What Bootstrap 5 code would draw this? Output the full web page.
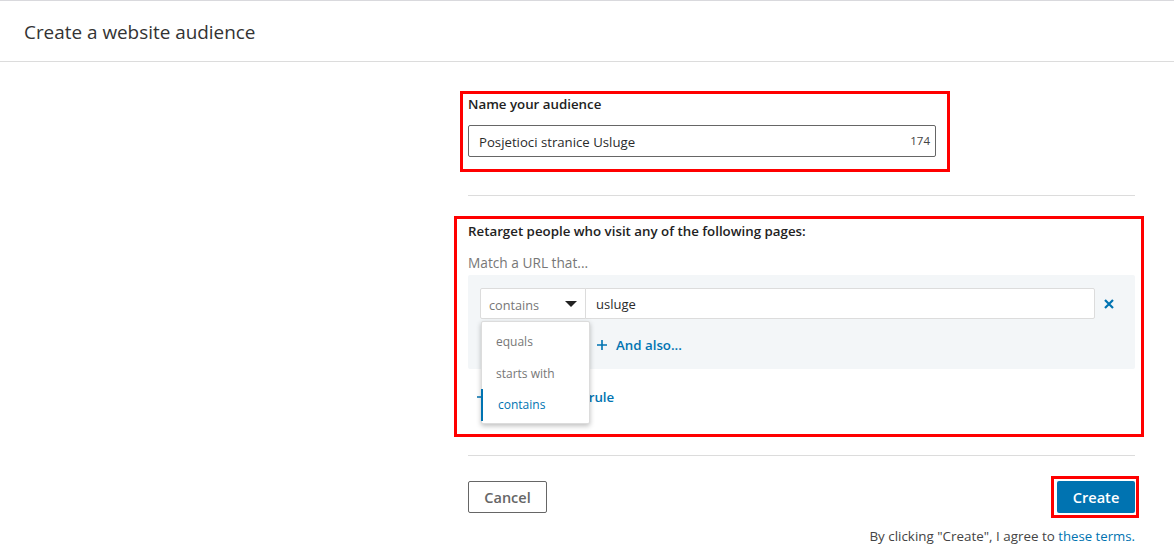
<!DOCTYPE html>
<html lang="en">
<head>
    <meta charset="UTF-8">
    <meta name="viewport" content="width=device-width, initial-scale=1.0">
    <title>Create a website audience</title>
    <link href="https://cdn.jsdelivr.net/npm/bootstrap@5.3.0/dist/css/bootstrap.min.css" rel="stylesheet">
    <style>
        html, body { height: 558px; overflow: hidden; }
        body { font-family: "Open Sans", "Noto Sans", sans-serif; font-size: 13px; color: #2b2b2b; background: #fff; }
        .page-head { height: 62px; padding: 2px 0 0 24px; border-top: 1px solid #d9d9dd; border-bottom: 1px solid #dcdcdc; font-size: 18.9px; color: #333; }
        .form-col { width: 667px; margin-left: 468px; padding-top: 29px; }
        .red-box { border: 3px solid #f00; }
        .box-name { width: 490px; height: 81px; margin-left: -8px; padding: 0 11px 0 5px; }
        .box-rules { width: 690px; height: 221px; margin-top: 20px; margin-left: -14px; padding: 2px 6px 0 11px; position: relative; }
        .box-create { width: 88px; height: 42px; margin-right: -4px; padding: 2px 3px; }
        .field-label { font-weight: 600; font-size: 13.3px; line-height: 20px; color: #222; }
        .name-input { height: 32px; margin-top: 11px; padding: 3px 5px 0 10px; border: 1px solid #666; border-radius: 2px; font-size: 13.2px; }
        .counter { font-size: 11.5px; color: #444; margin-top: -3px; }
        .rule { height: 1px; background: #dcdcdc; }
        .rule-top { margin-top: 23px; }
        .rule-bottom { margin-top: 18px; }
        .hint { margin-top: 12px; line-height: 20px; font-size: 13.7px; color: #777; }
        .url-panel { height: 94px; margin-top: 2px; padding: 13px 12px 0; background: #f3f6f8; border-radius: 2px; }
        .match-select { width: 106px; height: 31px; padding: 4px 8px 0; background: #fff; border: 1px solid #dcdcdc; border-radius: 2px 0 0 2px; font-size: 12.7px; color: #777; }
        .caret { width: 0; height: 0; margin-top: -4px; border-left: 6px solid transparent; border-right: 6px solid transparent; border-top: 6px solid #222; }
        .url-input { width: 510px; height: 31px; margin-left: -1px; padding: 2px 10px 0; background: #fff; border: 1px solid #dcdcdc; border-radius: 0 2px 2px 0; font-size: 13px; }
        .remove-icon { margin-left: 8px; }
        .blue-link { color: #0073b1; font-weight: 600; font-size: 13.3px; text-decoration: none; }
        .also { margin: 15px 0 0 116px; line-height: 22px; }
        .add-rule { margin: 17px 0 0 8px; line-height: 22px; }
        .add-rule a { gap: 17px; }
        .match-menu { position: absolute; left: 24px; top: 102px; width: 109px; height: 103px; padding-top: 5px; background: #fff; border: 1px solid #dcdcdc; border-radius: 2px; box-shadow: 0 2px 5px rgba(0,0,0,.25); font-size: 12px; color: #777; }
        .match-menu div { height: 32px; line-height: 30px; padding-left: 14px; }
        .match-menu .active-item { margin-top: -2px; margin-left: -1px; padding-left: 15px; line-height: 31px; border-left: 2px solid #0073b1; color: #0073b1; font-weight: 500; }
        .actions-row { margin-top: 20px; }
        .btn-cancel { width: 79px; height: 32px; padding: 1px 0 0; border: 1px solid #666; border-radius: 2px; background: #fff; font-size: 14.5px; font-weight: 600; color: #666; }
        .btn-create { width: 78px; height: 32px; padding: 1px 0 0; border: 0; border-radius: 2px; background: #0073b1; font-size: 14.6px; font-weight: 600; color: #fff; }
        .terms { margin-top: 8px; font-size: 13.4px; line-height: 20px; color: #444; }
        .terms a { color: #0073b1; font-weight: 500; font-size: 13.2px; text-decoration: none; }
    </style>
</head>
<body>
<div class="page-head d-flex align-items-center">Create a website audience</div>
<div class="form-col">
    <div class="red-box box-name">
        <div class="field-label">Name your audience</div>
        <div class="name-input d-flex align-items-center justify-content-between">
            <span>Posjetioci stranice Usluge</span>
            <span class="counter">174</span>
        </div>
    </div>
    <div class="rule rule-top"></div>
    <div class="red-box box-rules">
        <div class="field-label">Retarget people who visit any of the following pages:</div>
        <div class="hint">Match a URL that...</div>
        <div class="url-panel">
            <div class="d-flex align-items-center">
                <div class="match-select d-flex align-items-center justify-content-between">
                    <span>contains</span>
                    <span class="caret"></span>
                </div>
                <div class="url-input d-flex align-items-center">usluge</div>
                <svg class="remove-icon" width="12" height="12" viewBox="0 0 12 12">
                    <path d="M2 2 L10 10 M10 2 L2 10" stroke="#0073b1" stroke-width="2.2" fill="none"/>
                </svg>
            </div>
            <div class="also">
                <a href="#" class="blue-link d-inline-flex align-items-center gap-2">
                    <svg width="12" height="12" viewBox="0 0 12 12"><path d="M6 1 V11 M1 6 H11" stroke="#0073b1" stroke-width="1.6" fill="none"/></svg>
                    And also...
                </a>
            </div>
        </div>
        <div class="add-rule">
            <a href="#" class="blue-link d-inline-flex align-items-center">
                <svg width="12" height="12" viewBox="0 0 12 12"><path d="M6 1 V11 M1 6 H11" stroke="#0073b1" stroke-width="1.6" fill="none"/></svg>
                Add another rule
            </a>
        </div>
        <div class="match-menu">
            <div>equals</div>
            <div>starts with</div>
            <div class="active-item">contains</div>
        </div>
    </div>
    <div class="rule rule-bottom"></div>
    <div class="actions-row d-flex justify-content-between align-items-center">
        <button class="btn-cancel">Cancel</button>
        <div class="red-box box-create">
            <button class="btn-create">Create</button>
        </div>
    </div>
    <div class="terms text-end">By clicking "Create", I agree to <a href="#">these terms.</a></div>
</div>

<script src="https://cdn.jsdelivr.net/npm/bootstrap@5.3.0/dist/js/bootstrap.bundle.min.js"></script>
</body>
</html>
